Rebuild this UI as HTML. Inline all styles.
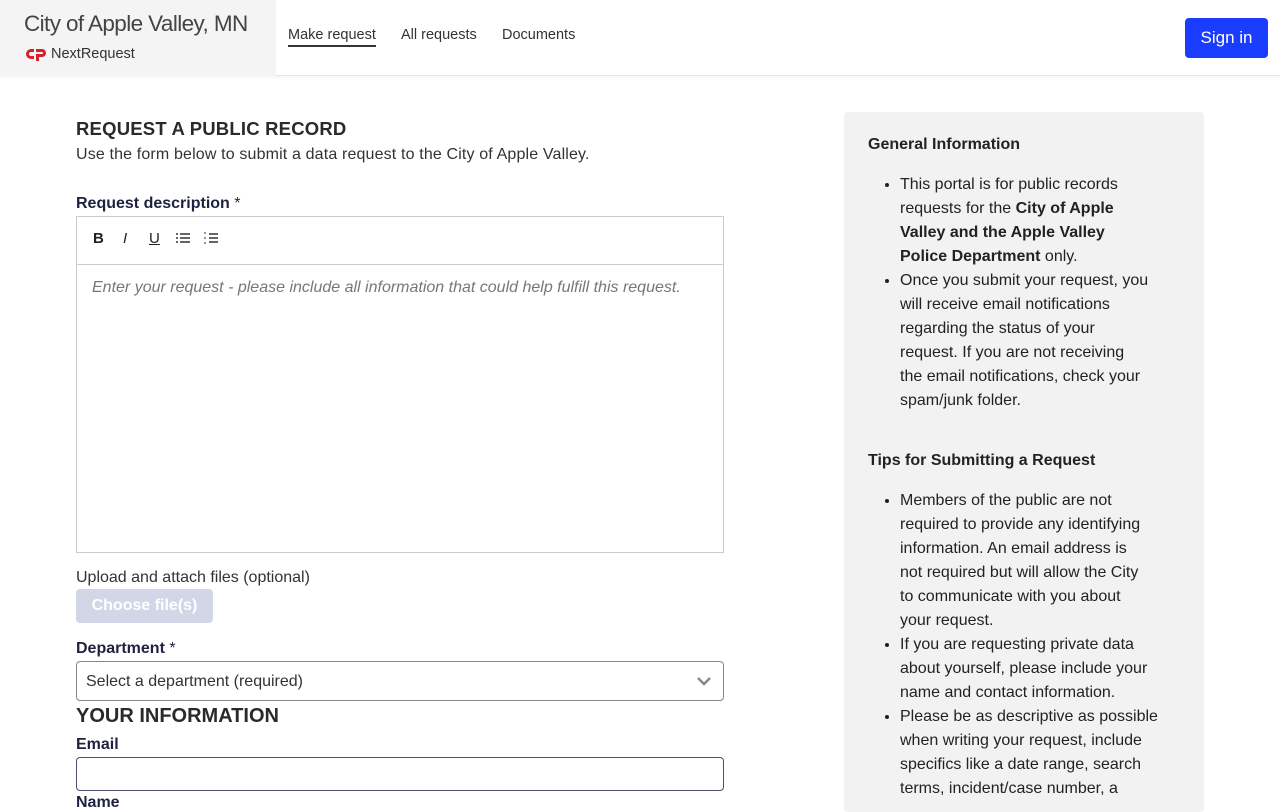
<!DOCTYPE html>
<html><head><meta charset="utf-8"><style>
*{box-sizing:border-box}
body{margin:0;width:1280px;height:800px;overflow:hidden;background:#fff;font-family:"Liberation Sans",Arial,sans-serif;color:#222;}
.hdr{position:absolute;top:0;left:0;width:1280px;height:76px;border-bottom:1px solid #e6e6e6;box-shadow:0 1px 3px rgba(0,0,0,.06);}
.brand{position:absolute;left:0;top:0;width:276px;height:76px;background:#f4f4f4;}
.city{position:absolute;left:24px;top:11px;font-size:22.5px;color:#444;letter-spacing:-0.6px;}
.nr{position:absolute;left:26px;top:46px;font-size:14.5px;color:#333;}
.nr svg{vertical-align:-3px;margin-right:4px}
.nav{position:absolute;top:27px;font-size:14.5px;color:#333}
.nav.a{border-bottom:2px solid #333;padding-bottom:2px}
.sign{position:absolute;left:1185px;top:18px;width:83px;height:40px;background:#1a3cff;color:#fff;border-radius:4px;font-size:17px;text-align:center;line-height:40px}
h1{position:absolute;top:118px;left:76px;margin:0;font-size:18.5px;font-weight:bold;color:#2a2a2a;letter-spacing:.2px}
.p{position:absolute;font-size:16px;color:#333}
.lbl{position:absolute;font-size:16px;font-weight:bold;color:#1e2240}
.lbl span{font-weight:normal}
.ed{position:absolute;left:76px;top:216px;width:648px;height:337px;border:1px solid #ccc}
.tb{height:48px;border-bottom:1px solid #ccc;position:relative}
.tb b,.tb i,.tb u{position:absolute;top:13px;font-size:15px;color:#222}
.ph{position:absolute;left:15px;top:62px;font-style:italic;color:#777;font-size:16px}
.btn{position:absolute;left:76px;top:589px;width:137px;height:34px;background:#d3d6e6;color:#fff;font-weight:bold;border-radius:4px;text-align:center;line-height:34px;font-size:16px}
.sel{position:absolute;left:76px;top:661px;width:648px;height:40px;border:1px solid #888;border-radius:4px;font-size:16px;padding:11px 9px;color:#333}
.inp{position:absolute;left:76px;top:757px;width:648px;height:34px;border:1px solid #4a4e72;border-radius:4px}
.side{position:absolute;left:844px;top:112px;width:360px;height:700px;background:#f2f2f2;border-radius:4px;font-size:16px;line-height:24px;color:#222}
.side h3{margin:0;position:absolute;left:24px;font-size:16px;font-weight:bold}
.side ul{position:absolute;left:24px;margin:0;padding-left:32px;width:330px}
</style></head><body>
<div class="hdr">
 <div class="brand"><div class="city">City of Apple Valley, MN</div>
 <div class="nr"><svg width="21" height="13" viewBox="0 0 21 13"><path d="M8 1H5a5 5 0 0 0 0 10h3V8H5a2 2 0 0 1 0-4h3z" fill="#d81f2a"/><path d="M10 1h6a4 4 0 0 1 0 8h-3v4h-3V6h6a1 1 0 0 0 0-2h-6z" fill="#d81f2a"/></svg>NextRequest</div></div>
 <div class="nav a" style="left:288px">Make request</div>
 <div class="nav" style="left:401px">All requests</div>
 <div class="nav" style="left:502px">Documents</div>
 <div class="sign">Sign in</div>
</div>
<h1>REQUEST A PUBLIC RECORD</h1>
<div class="p" style="left:76px;top:146px;letter-spacing:.15px">Use the form below to submit a data request to the City of Apple Valley.</div>
<div class="lbl" style="left:76px;top:195px">Request description <span>*</span></div>
<div class="ed"><div class="tb">
<b style="left:16px">B</b><i style="left:46px">I</i><u style="left:72px">U</u>
<svg style="position:absolute;left:99px;top:14px" width="14" height="14" viewBox="0 0 14 14" stroke="#333" stroke-width="1.5"><path d="M0 3h2M4 3h10M0 7h2M4 7h10M0 11h2M4 11h10"/></svg>
<svg style="position:absolute;left:127px;top:14px" width="14" height="14" viewBox="0 0 14 14" stroke="#333"><path d="M0 2h2M0 7h2M0 12h2" stroke-width="1"/><path d="M5 3h9M5 7h9M5 11h9" stroke-width="1.5"/></svg>
</div><div class="ph">Enter your request - please include all information that could help fulfill this request.</div></div>
<div class="p" style="left:76px;top:569px">Upload and attach files (optional)</div>
<div class="btn">Choose file(s)</div>
<div class="lbl" style="left:76px;top:640px">Department <span>*</span></div>
<div class="sel">Select a department (required)<svg style="position:absolute;right:12px;top:14px" width="14" height="10" viewBox="0 0 14 10"><path d="M1 2l6 6 6-6" stroke="#888" stroke-width="2.5" fill="none"/></svg></div>
<div class="lbl" style="left:76px;top:705px;font-size:20px;color:#2a2a2a">YOUR INFORMATION</div>
<div class="lbl" style="left:76px;top:736px">Email</div>
<div class="inp"></div>
<div class="lbl" style="left:76px;top:794px">Name</div>
<div class="side">
<h3 style="top:21px">General Information</h3>
<ul style="top:61px"><li>This portal is for public records<br>requests for the <b>City of Apple<br>Valley and the Apple Valley<br>Police Department</b> only.</li>
<li>Once you submit your request, you<br>will receive email notifications<br>regarding the status of your<br>request. If you are not receiving<br>the email notifications, check your<br>spam/junk folder.</li></ul>
<h3 style="top:337px">Tips for Submitting a Request</h3>
<ul style="top:377px"><li>Members of the public are not<br>required to provide any identifying<br>information. An email address is<br>not required but will allow the City<br>to communicate with you about<br>your request.</li>
<li>If you are requesting private data<br>about yourself, please include your<br>name and contact information.</li>
<li>Please be as descriptive as possible<br>when writing your request, include<br>specifics like a date range, search<br>terms, incident/case number, a</li></ul>
</div>
</body></html>
